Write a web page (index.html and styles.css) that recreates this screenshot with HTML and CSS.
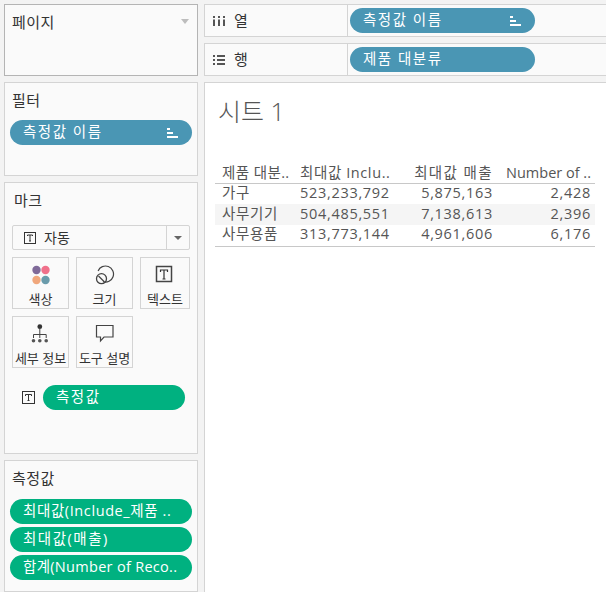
FILE: index.html
```html
<!DOCTYPE html>
<html lang="ko">
<head>
<meta charset="utf-8">
<title>시트 1</title>
<link rel="stylesheet" href="styles.css">
</head>
<body>
<div class="app">
  <aside class="side">
    <section class="card pages">
      <div class="pages-head"><h2 class="card-title">페이지</h2><span class="tri tri-light"></span></div>
    </section>
    <section class="card filters">
      <h2 class="card-title">필터</h2>
      <div class="pill blue wide"><span class="ko">측정값 이름</span><svg class="sort" width="14" height="12" viewBox="0 0 14 12"><path d="M2 1h3v2H2zM2 5h6v2H2zM2 9h11v2H2z" fill="#fff"/></svg></div>
    </section>
    <section class="card marks">
      <h2 class="card-title">마크</h2>
      <div class="select">
        <div class="select-main">
          <svg width="14" height="14" viewBox="0 0 14 14"><rect x="1.500" y="1.500" width="11" height="11" fill="none" stroke="#333"/><path d="M4.500 5V4h5v1M7 4v6M6 10h2" fill="none" stroke="#333"/></svg>
          <span>자동</span>
        </div>
        <div class="select-arrow"><span class="tri tri-dark"></span></div>
      </div>
      <div class="tiles">
        <div class="tile t-std">
          <svg class="tile-icon" width="22" height="24" viewBox="0 0 22 24"><circle cx="6.500" cy="5" r="4.200" fill="#7f6a99"/><circle cx="15.500" cy="5" r="4.200" fill="#f0708a"/><circle cx="6.500" cy="15" r="4.200" fill="#f0a77c"/><circle cx="15.500" cy="15" r="4.200" fill="#6a9bab"/></svg>
          <span>색상</span>
        </div>
        <div class="tile t-std">
          <svg class="tile-icon" width="22" height="24" viewBox="0 0 22 24"><path d="M4.100 6A8 8 0 1 1 9 16.600" fill="none" stroke="#444" stroke-width="1.200"/><circle cx="7.500" cy="13.700" r="5" fill="none" stroke="#444" stroke-width="1.300"/><path d="M4.500 11l5.500 5.500" stroke="#444" stroke-width="1.300"/></svg>
          <span>크기</span>
        </div>
        <div class="tile t-text">
          <svg class="tile-icon" width="22" height="24" viewBox="0 0 22 24"><rect x="2.500" y="1.500" width="15" height="15" fill="none" stroke="#444" stroke-width="1.500"/><path d="M6.500 7V5h7v2M10 5v9M8.500 14h3" fill="none" stroke="#333" stroke-width="1.200"/></svg>
          <span>텍스트</span>
        </div>
        <div class="tile t-std">
          <svg class="tile-icon" width="22" height="24" viewBox="0 0 22 24"><circle cx="9.800" cy="2.700" r="2.400" fill="#333"/><path d="M9.800 5v9M3.500 14v-3.500h12.700V14" fill="none" stroke="#444"/><circle cx="3.500" cy="16.700" r="1.800" fill="#555"/><circle cx="9.800" cy="16.700" r="1.800" fill="#555"/><circle cx="16.200" cy="16.700" r="1.800" fill="#555"/></svg>
          <span>세부 정보</span>
        </div>
        <div class="tile t-std">
          <svg class="tile-icon" width="22" height="24" viewBox="0 0 22 24"><path d="M2.500 1.500H19v11.500H10l-3.500 4v-4h-4z" fill="none" stroke="#444" stroke-width="1.200"/></svg>
          <span>도구 설명</span>
        </div>
      </div>
      <div class="mark-row">
        <svg width="14" height="14" viewBox="0 0 14 14"><rect x=".5" y=".5" width="12" height="12" fill="none" stroke="#333"/><path d="M3.500 5V3.500h6V5M6.500 3.500v6M5.500 9.500h2" fill="none" stroke="#333"/></svg>
        <div class="pill green mark-pill"><span class="ko">측정값</span></div>
      </div>
    </section>
    <section class="card measures">
      <h2 class="card-title">측정값</h2>
      <div class="pill-stack">
        <div class="pill green wide"><span class="mix">최대값(Include_제품 ..</span></div>
        <div class="pill green wide"><span class="ko">최대값(매출)</span></div>
        <div class="pill green wide"><span>합계(Number of Reco..</span></div>
      </div>
    </section>
  </aside>
  <main class="content">
    <div class="shelf">
      <div class="shelf-label">
        <svg width="14" height="12" viewBox="0 0 14 12"><path d="M1 1h2v2H1zM6 1h2v2H6zM11 1h2v2h-2zM1 4.500h2V11H1zM6 4.500h2V11H6zM11 4.500h2V11h-2z" fill="#555"/></svg>
        <span>열</span>
      </div>
      <div class="shelf-body"><div class="pill blue shelf-pill"><span class="ko">측정값 이름</span><svg class="sort" width="14" height="12" viewBox="0 0 14 12"><path d="M2 1h3v2H2zM2 5h6v2H2zM2 9h11v2H2z" fill="#fff"/></svg></div></div>
    </div>
    <div class="shelf">
      <div class="shelf-label">
        <svg width="14" height="12" viewBox="0 0 14 12"><path d="M1 1h2v2H1zM5 1h8v2H5zM1 5h2v2H1zM5 5h8v2H5zM1 9h2v2H1zM5 9h8v2H5z" fill="#555"/></svg>
        <span>행</span>
      </div>
      <div class="shelf-body"><div class="pill blue shelf-pill"><span class="ko">제품 대분류</span></div></div>
    </div>
    <section class="view">
      <h1 class="sheet-title">시트 1</h1>
      <table class="data">
        <thead>
          <tr><th class="c1">제품 대분..</th><th class="c2">최대값 Inclu..</th><th class="c3 num">최대값 매출</th><th class="c4 num">Number of ..</th></tr>
        </thead>
        <tbody>
          <tr><td>가구</td><td>523,233,792</td><td class="num">5,875,163</td><td class="num">2,428</td></tr>
          <tr class="alt"><td>사무기기</td><td>504,485,551</td><td class="num">7,138,613</td><td class="num">2,396</td></tr>
          <tr><td>사무용품</td><td>313,773,144</td><td class="num">4,961,606</td><td class="num">6,176</td></tr>
        </tbody>
      </table>
    </section>
  </main>
</div>
</body>
</html>
```
FILE: styles.css
```css
* { box-sizing: border-box; }
html, body { margin: 0; height: 100%; }
body {
  background: #f3f3f3;
  color: #333;
  font-family: "Open Sans", "Noto Sans CJK KR", sans-serif;
  overflow: hidden;
}
.app {
  display: flex;
  gap: 6px;
  height: 592px;
  padding: 4px 0 0 4px;
}
.side {
  width: 194px;
  flex: none;
  display: flex;
  flex-direction: column;
  gap: 6px;
}
.content {
  flex: 1;
  display: flex;
  flex-direction: column;
  gap: 6px;
  min-width: 0;
}
.card {
  background: #fafafa;
  border: 1px solid #d4d4d4;
  padding: 7px 5px 0;
}
.card-title {
  margin: 0;
  font-size: 15px;
  font-weight: 400;
  line-height: 20px;
  letter-spacing: .4px;
  color: #333;
  padding-left: 2px;
}
.pages { height: 72px; border-color: #b4b4b4; padding-top: 6px; }
.pages-head { display: flex; justify-content: space-between; padding: 1px 3px 0 2px; }
.pages-head .card-title { padding: 0; }
.filters { height: 94px; }
.filters .pill { margin-top: 10px; }
.marks { height: 272px; padding: 7px 7px 0; }
.measures { flex: 1; padding-top: 7px; }
.tri { display: block; width: 0; height: 0; border-left: 4px solid transparent; border-right: 4px solid transparent; }
.tri-light { border-top: 5px solid #bdbdbd; margin-top: 7px; }
.tri-dark { border-top: 4px solid #666; }
.pill {
  display: flex;
  align-items: center;
  justify-content: space-between;
  height: 25px;
  border-radius: 13px;
  color: #fff;
  font-size: 14.5px;
  letter-spacing: .3px;
  padding: 0 13px;
}
.pill span { position: relative; top: -2px; white-space: nowrap; }
.pill .ko { letter-spacing: 1.5px; }
.pill .mix { letter-spacing: .6px; }
.blue { background: #4a96b4; }
.green { background: #00b180; }
.wide { width: 182px; }
.sort { flex: none; margin-right: 0; }
.pill-stack { display: flex; flex-direction: column; gap: 3px; margin-top: 11px; }
.select {
  display: flex;
  height: 25px;
  margin-top: 15px;
  border: 1px solid #d4d4d4;
  border-radius: 2px;
  width: 178px;
}
.select-main {
  flex: 1;
  display: flex;
  align-items: center;
  gap: 7px;
  padding-left: 10px;
  font-size: 14px;
}
.select-main span { position: relative; top: -1px; }
.select-arrow {
  width: 23px;
  border-left: 1px solid #d4d4d4;
  display: flex;
  align-items: center;
  justify-content: center;
}
.tiles {
  display: grid;
  grid-template-columns: 57px 57px 50px;
  grid-auto-rows: 52px;
  gap: 7px;
  margin-top: 7px;
}
.tile {
  border: 1px solid #d4d4d4;
  display: flex;
  flex-direction: column;
  align-items: center;
  font-size: 13px;
  line-height: 16px;
  padding-top: 7px;
  white-space: nowrap;
  color: #333;
}
.tile-icon { flex: none; height: 24px; margin-bottom: 2px; }
.mark-row {
  display: flex;
  align-items: center;
  gap: 7px;
  margin: 17px 0 0 10px;
}
.mark-pill { width: 142px; }
.shelf {
  display: flex;
  height: 33px;
  background: #fafafa;
  border: 1px solid #d4d4d4;
  border-right: 0;
}
.shelf-label {
  width: 143px;
  flex: none;
  display: flex;
  align-items: center;
  gap: 8px;
  padding-left: 7px;
  border-right: 1px solid #d4d4d4;
  font-size: 15px;
}
.shelf-label span { position: relative; top: -1px; }
.shelf-body { flex: 1; padding: 3px 0 0 2px; }
.shelf-pill { width: 185px; }
.view {
  flex: 1;
  background: #fff;
  border: 1px solid #d4d4d4;
  border-right: 0;
  border-bottom: 0;
  padding: 0 0 0 10px;
}
.sheet-title {
  margin: 10px 0 0 3px;
  font-size: 25px;
  font-weight: 300;
  line-height: 36px;
  color: #555;
}
.data {
  border-collapse: collapse;
  table-layout: fixed;
  width: 380px;
  margin-top: 33px;
  font-size: 14.500px;
  letter-spacing: .7px;
  line-height: 18px;
  color: #555;
}
.data th {
  font-weight: 400;
  height: 21px;
  border-bottom: 1px solid #c8c8c8;
  text-align: left;
  padding: 1px 0 0 7px;
  white-space: nowrap;
}
.data td { height: 21px; padding: 0 0 2px 7px; white-space: nowrap; }
.data .num { text-align: right; padding: 0 4px 2px 0; }
.data .c1 { width: 78px; letter-spacing: .4px; }
.data .c2 { width: 100px; letter-spacing: .6px; }
.data .c3 { width: 104px; letter-spacing: 1.4px; padding-top: 1px; padding-bottom: 0; }
.data .c4 { width: 98px; letter-spacing: 0; padding-top: 1px; padding-bottom: 0; }
.data tbody tr:last-child td { border-bottom: 1px solid #c8c8c8; }
.alt td { background: #f5f5f5; }
```
